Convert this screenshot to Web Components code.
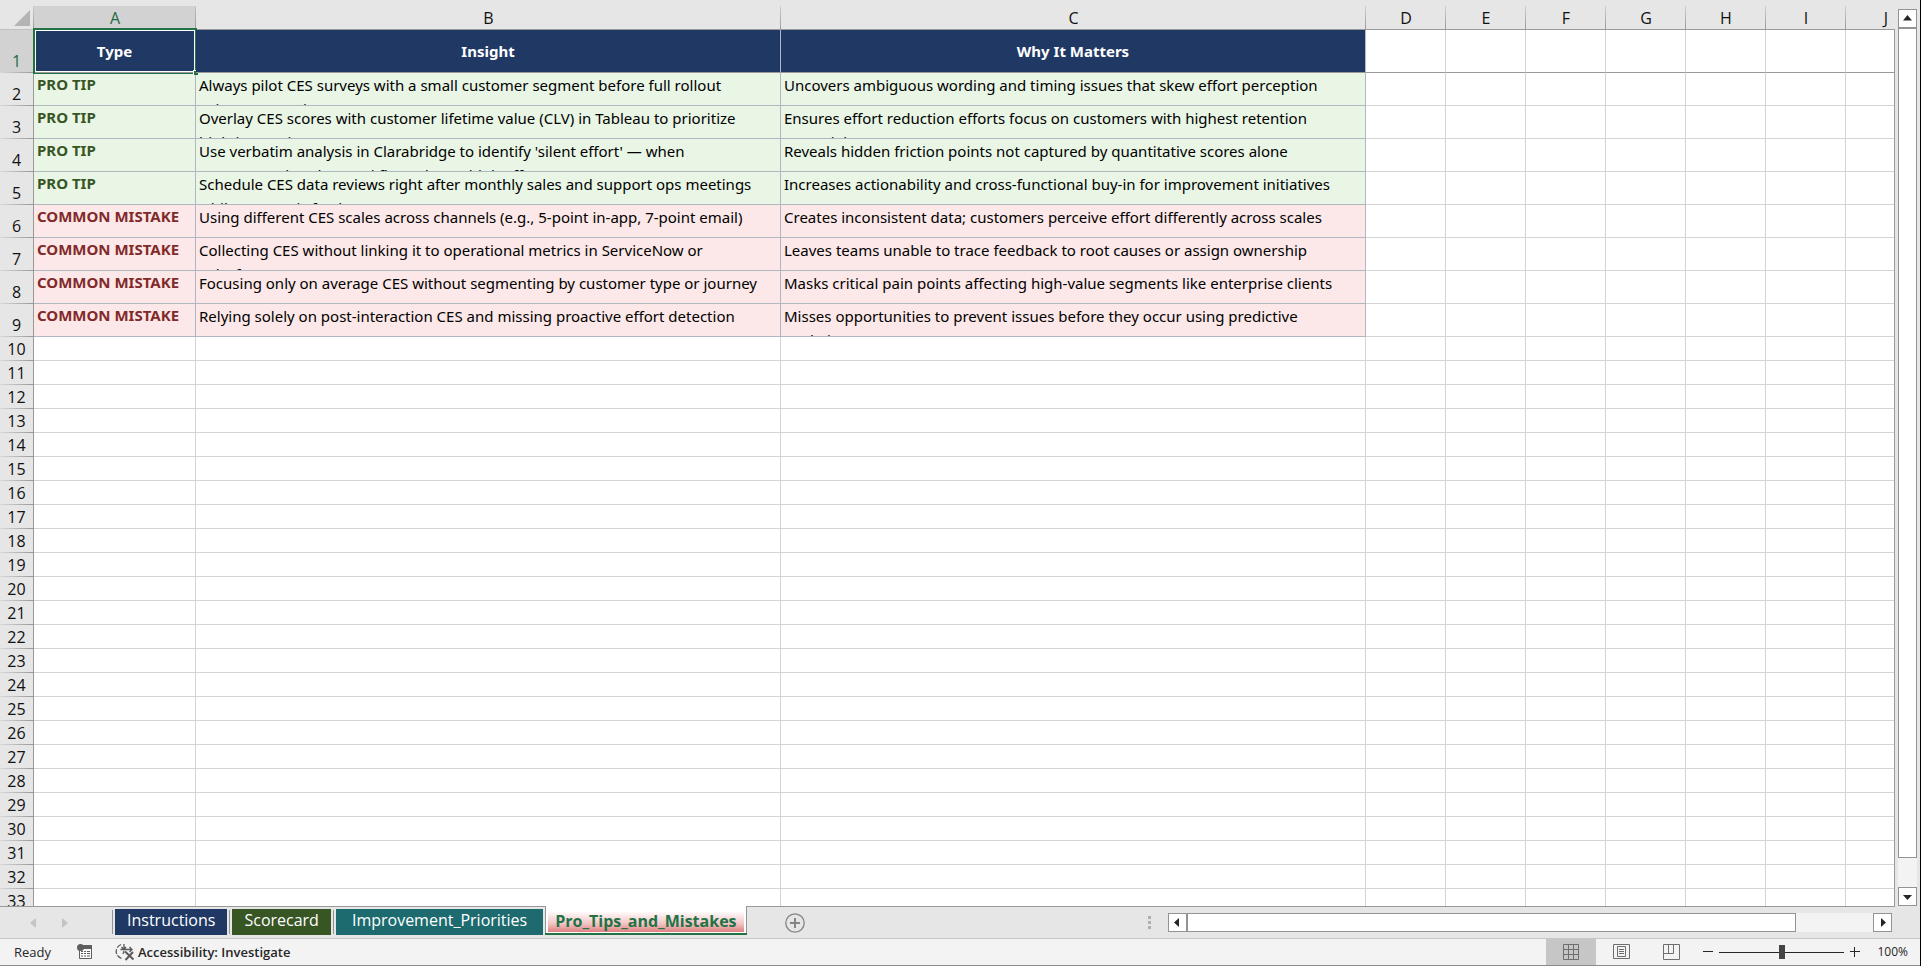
<!DOCTYPE html>
<html lang="en">
<head>
<meta charset="utf-8">
<title>Pro_Tips_and_Mistakes</title>
<style>
    body {
        margin: 0;
        font-family: "Open Sans", "Noto Sans", sans-serif;
        color: #262626;
    }
</style>
</head>
<body>
<work-book></work-book>

<script>
// ---------- data ----------
const tips = [
    ["tip", "PRO TIP", "Always pilot CES surveys with a small customer segment before full rollout\nusing UserTesting", "Uncovers ambiguous wording and timing issues that skew effort perception"],
    ["tip", "PRO TIP", "Overlay CES scores with customer lifetime value (CLV) in Tableau to prioritize\nhigh-impact issues", "Ensures effort reduction efforts focus on customers with highest retention\npotential"],
    ["tip", "PRO TIP", "Use verbatim analysis in Clarabridge to identify 'silent effort' — when\ncustomers abandon workflows due to high effort", "Reveals hidden friction points not captured by quantitative scores alone"],
    ["tip", "PRO TIP", "Schedule CES data reviews right after monthly sales and support ops meetings\nwhile context is fresh", "Increases actionability and cross-functional buy-in for improvement initiatives"],
    ["mistake", "COMMON MISTAKE", "Using different CES scales across channels (e.g., 5-point in-app, 7-point email)", "Creates inconsistent data; customers perceive effort differently across scales"],
    ["mistake", "COMMON MISTAKE", "Collecting CES without linking it to operational metrics in ServiceNow or\nSalesforce", "Leaves teams unable to trace feedback to root causes or assign ownership"],
    ["mistake", "COMMON MISTAKE", "Focusing only on average CES without segmenting by customer type or journey", "Masks critical pain points affecting high-value segments like enterprise clients"],
    ["mistake", "COMMON MISTAKE", "Relying solely on post-interaction CES and missing proactive effort detection", "Misses opportunities to prevent issues before they occur using predictive\nanalytics"]
];
const letters = "ABCDEFGHIJ".split("");
const lastRow = 33;

// ---------- scroll bar ----------
var template_scroll = document.createElement("template");
template_scroll.innerHTML = `
<button class="end" aria-label="Scroll back"><svg viewBox="0 0 17 17"><path/></svg></button>
<div class="thumb"></div>
<div class="track"></div>
<button class="end" aria-label="Scroll forward"><svg viewBox="0 0 17 17"><path/></svg></button>

<style>
    :host {
        display: flex;
        box-sizing: border-box;
    }

    :host([direction="vertical"]) {
        flex-direction: column;
        width: 19px;
    }

    :host([direction="horizontal"]) {
        height: 19px;
    }

    .end, .thumb {
        box-sizing: border-box;
        border: 1px solid #939393;
        background: #fff;
    }

    .end {
        flex: none;
        width: 19px;
        height: 19px;
        padding: 0;
    }

    .end svg {
        display: block;
        fill: #262626;
    }

    .thumb {
        flex: var(--thumb, 8);
    }

    .track {
        flex: var(--track, 1);
        background: #f3f3f3;
    }
</style>
`;

class ScrollRail extends HTMLElement {
    constructor(){
        super();
        this.attachShadow({mode:"open"})
    }

    connectedCallback(){
        this.shadowRoot.appendChild(template_scroll.content.cloneNode(true));
        const arrows = this.getAttribute("direction") === "vertical"
            ? ["M8.500 5 L13 10.500 H4 Z", "M8.500 12 L4 7 H13 Z"]
            : ["M5 8.500 L10 4 V13 Z", "M12 8.500 L7 4 V13 Z"];
        this.shadowRoot.querySelectorAll("path").forEach((path, i) => path.setAttribute("d", arrows[i]));
    }
}
customElements.define("scroll-rail", ScrollRail)

// ---------- grid ----------
var template_grid = document.createElement("template");
template_grid.innerHTML = `
<div class="view">
    <table>
        <colgroup>
            <col class="num"><col class="type"><col class="wide"><col class="wide">
            <col span="7" class="plain">
        </colgroup>
        <thead></thead>
        <tbody></tbody>
    </table>
</div>
<div class="side"><scroll-rail direction="vertical"></scroll-rail></div>

<style>
    :host {
        display: flex;
        min-height: 0;
        background: #e6e6e6;
    }

    .view {
        flex: 1;
        min-width: 0;
        overflow: hidden;
        background: #fff;
        border-bottom: 1px solid #999;
    }

    .side {
        display: flex;
        padding: 9px 3px 1px 4px;
        background: linear-gradient(#999, #999) 0 29px / 1px 100% no-repeat;
        --thumb: 830;
        --track: 29;
    }

    table {
        table-layout: fixed;
        width: 100%;
        border-collapse: separate;
        border-spacing: 0;
    }

    .num { width: 34px; }
    .type { width: 162px; }
    .wide { width: 585px; }
    .plain { width: 80px; }

    th, td {
        box-sizing: border-box;
        padding: 0;
    }

    thead th, tbody th {
        font-size: 16px;
        line-height: 22px;
        font-weight: 400;
        color: #111;
        text-align: center;
        vertical-align: bottom;
    }

    thead th {
        height: 30px;
        border-bottom: 1px solid #999;
        background: linear-gradient(#d0d0d0, #999) right bottom / 1px 23px no-repeat #e6e6e6;
    }

    thead th.on {
        color: #1f6b45;
        background:
            linear-gradient(#c0c0c0, #999) right bottom / 1px 23px no-repeat,
            linear-gradient(#d2d2d2, #d2d2d2) bottom / 100% 23px no-repeat #e6e6e6;
    }

    thead .corner {
        border-bottom-color: #c0c0c0;
    }

    .corner svg {
        display: block;
        margin: 10px 0 3px 14px;
    }

    tbody th {
        padding-bottom: 1px;
        border-right: 1px solid #999;
        background: linear-gradient(90deg, #d8d8d8, #999) bottom / 100% 1px no-repeat #e6e6e6;
    }

    tbody th.on {
        color: #1f6b45;
        background-color: #d2d2d2;
    }

    td {
        height: 24px;
        border-right: 1px solid #d4d4d4;
        border-bottom: 1px solid #d4d4d4;
    }

    .title td {
        height: 43px;
        border-bottom-color: #999;
    }

    .title .fill {
        position: relative;
        background: #203864;
        border-right-color: #b0b7c1;
        color: #fff;
        font: 700 15px/22px "Noto Sans", sans-serif;
        text-align: center;
    }

    .entry td {
        height: 33px;
        vertical-align: top;
        font: 400 15px/24px "Noto Sans", sans-serif;
        color: #000;
    }

    .entry .fill {
        border-color: #b0b7c1;
    }

    .entry .kind {
        font-weight: 700;
        line-height: 22px;
    }

    .tip .fill { background: #e9f5e5; }
    .tip .kind { color: #375623; }
    .mistake .fill { background: #fce8e8; }
    .mistake .kind { color: #822a2a; }

    .text {
        height: 32px;
        padding-left: 3px;
        overflow: hidden;
        white-space: pre;
    }

    /* selection frame lies over the cell's own borders */
    .cursor {
        position: absolute;
        inset: -2px -2px -2px -1px;
        border: 2px solid #217346;
        border-bottom-width: 1px;
        box-shadow: inset 0 -1px #999, inset 0 -2px #fff, inset 0 0 0 1px #fff;
    }

    .cursor::after {
        content: "";
        position: absolute;
        right: -3px;
        bottom: -2px;
        width: 4px;
        height: 4px;
        background: #217346;
        border: solid #fff;
        border-width: 1px 0 0 1px;
    }
</style>
`;

class SheetGrid extends HTMLElement {
    constructor(){
        super();
        this.attachShadow({mode:"open"})
    }

    connectedCallback(){
        this.shadowRoot.appendChild(template_grid.content.cloneNode(true));
        this.shadowRoot.querySelector("thead").innerHTML = `<tr>
            <th class="corner"><svg width="16" height="16"><path d="M16 0V16H0Z" fill="#b4b4b4"/></svg></th>
            ${letters.map((l, i) => `<th scope="col"${i === 0 ? ' class="on"' : ""}>${l}</th>`).join("")}
        </tr>`;

        let rows = `<tr class="title"><th scope="row" class="on">1</th>
            <td class="fill">Type<span class="cursor"></span></td>
            <td class="fill">Insight</td>
            <td class="fill">Why It Matters</td>${this.blanks(7)}</tr>`;
        tips.forEach(([group, kind, insight, why], i) => {
            rows += `<tr class="entry ${group}"><th scope="row">${i + 2}</th>
                <td class="fill kind"><div class="text">${kind}</div></td>
                <td class="fill"><div class="text">${insight}</div></td>
                <td class="fill"><div class="text">${why}</div></td>${this.blanks(7)}</tr>`;
        });
        for (let n = tips.length + 2; n <= lastRow; n++) {
            rows += `<tr><th scope="row">${n}</th>${this.blanks(10)}</tr>`;
        }
        this.shadowRoot.querySelector("tbody").innerHTML = rows;
    }

    blanks(count){
        return "<td></td>".repeat(count);
    }
}
customElements.define("sheet-grid", SheetGrid)

// ---------- one sheet tab ----------
var template_tab = document.createElement("template");
template_tab.innerHTML = `
<button><slot></slot></button>

<style>
    :host {
        display: flex;
        align-items: flex-start;
    }

    :host(:not([active])) {
        margin-top: 2px;
        padding: 0 2px 0 3px;
        height: 26px;
        background: linear-gradient(#939393, #939393) 0 1px / 1px 24px no-repeat;
    }

    button {
        height: 26px;
        padding: 0 var(--pad, 12px) 4px;
        border: 0;
        background: var(--color);
        color: #fff;
        font: 400 16px/22px "Open Sans", sans-serif;
        white-space: nowrap;
    }

    :host([active]) {
        margin-top: -1px;
        padding: 5px 2px 1px;
        height: 21px;
        background: #fff;
        border: solid #939393;
        border-width: 0 1px;
        box-shadow: 0 2px #217346;
    }

    :host([active]) button {
        height: 21px;
        padding: 0 7px 1px;
        background: linear-gradient(#fff, #f3c4c4 60%, #df8080);
        color: #217346;
        font-weight: 700;
        line-height: 20px;
    }
</style>
`;

class SheetTab extends HTMLElement {
    constructor(){
        super();
        this.attachShadow({mode:"open"})
    }

    connectedCallback(){
        this.shadowRoot.appendChild(template_tab.content.cloneNode(true));
    }
}
customElements.define("sheet-tab", SheetTab)

// ---------- tab strip ----------
var template_strip = document.createElement("template");
template_strip.innerHTML = `
<div class="nav">
    <button aria-label="Previous sheet"><svg width="6" height="10"><path d="M6 0V10L0 5Z"/></svg></button>
    <button aria-label="Next sheet"><svg width="6" height="10"><path d="M0 0V10L6 5Z"/></svg></button>
</div>
<slot></slot>
<button class="add" aria-label="New sheet">
    <svg width="20" height="20" fill="none" stroke="#858585"><circle cx="10" cy="10" r="9.200" stroke-width="1.300"/><path d="M10 5V15M5 10H15" stroke-width="2"/></svg>
</button>
<div class="gap"></div>
<svg class="grip" width="3" height="13" fill="#b0b0b0"><path d="M0 0h3v3H0zM0 5h3v3H0zM0 10h3v3H0z"/></svg>
<scroll-rail direction="horizontal"></scroll-rail>

<style>
    :host {
        display: flex;
        align-items: flex-start;
        height: 31px;
        background: #e6e6e6;
        border-bottom: 1px solid #c6c6c6;
    }

    button {
        display: block;
        padding: 0;
        border: 0;
        background: none;
    }

    .nav {
        display: flex;
        gap: 26px;
        padding: 11px 44px 0 30px;
        fill: #c4c4c4;
    }

    svg { display: block; }

    .add { margin: 6px 0 0 38px; }
    .gap { flex: 19; }
    .grip { margin: 9px 17px 0 0; }

    scroll-rail {
        flex: 40;
        margin: 6px 28px 0 0;
        --thumb: 607;
        --track: 77;
    }
</style>
`;

class SheetStrip extends HTMLElement {
    constructor(){
        super();
        this.attachShadow({mode:"open"})
    }

    connectedCallback(){
        this.shadowRoot.appendChild(template_strip.content.cloneNode(true));
    }
}
customElements.define("sheet-strip", SheetStrip)

// ---------- status bar ----------
var template_status = document.createElement("template");
template_status.innerHTML = `
<span class="ready">Ready</span>
<button class="macro" aria-label="Record macro">
    <svg width="16" height="16" viewBox="0 0 16 16">
        <path d="M2.500 5V14.500H14.500V2" fill="#fff" stroke="#5f5f5f"/>
        <path d="M6 1H15V5H6Z" fill="#5f5f5f"/><circle cx="3.500" cy="3.500" r="3.500" fill="#5f5f5f"/>
        <path d="M4 7.500H6M7 7.500H9M10 7.500H13M4 9.500H6M7 9.500H9M10 9.500H13M4 12H6M7 12H9M10 12H13" stroke="#5f5f5f"/>
    </svg>
</button>
<button class="access">
    <svg width="20" height="18" viewBox="0 0 20 18" fill="none" stroke="#5a5a5a" stroke-width="1.300">
        <path d="M6 1.500C2.500 3 1 6 1.200 9C1.500 12 3.500 14.500 7 15.500" stroke-dasharray="5 1.500"/>
        <path d="M9 1V6M6.500 4L9 6.500L11 4M5.500 6.500H17M14.500 4L17 6.500L14.500 9M9 8L8 11"/>
        <path d="M10 8.500L18.500 16.500M18 9L10.500 17" stroke-width="2"/>
    </svg>
    Accessibility: Investigate
</button>
<div class="gap"></div>
<button class="view on" aria-label="Normal"><svg width="16" height="16" fill="none" stroke="#6e6e6e"><path d="M.5 .5H15.500V15.500H.5ZM5.500 .5V15.500M10.500 .5V15.500M.5 5.500H15.500M.5 10.500H15.500"/></svg></button>
<button class="view" aria-label="Page layout"><svg width="17" height="16" fill="none" stroke="#6e6e6e"><path d="M.5 .5H16.500V14.500H.5ZM4.500 2.500H12.500V12.500H4.500ZM6 5.500H11M6 7.500H11M6 9.500H11"/></svg></button>
<button class="view" aria-label="Page break preview"><svg width="17" height="16" fill="none" stroke="#6e6e6e"><path d="M.5 .5H16.500V15.500H.5ZM.5 9.500H10.500V.5M5.500 .5V9.500"/></svg></button>
<button class="step out" aria-label="Zoom out"><svg width="10" height="10" stroke="#262626"><path d="M0 4.500H10"/></svg></button>
<input type="range" min="0" max="200" value="100" aria-label="Zoom">
<button class="step in" aria-label="Zoom in"><svg width="10" height="10" stroke="#262626"><path d="M0 4.500H10M4.500 0V10"/></svg></button>
<button class="level">100%</button>

<style>
    :host {
        display: flex;
        align-items: center;
        height: 26px;
        background: #f3f3f3;
        border-bottom: 1px solid #8c8c8c;
        font-size: 13px;
        line-height: 26px;
    }

    button {
        display: flex;
        align-items: center;
        height: 26px;
        padding: 0;
        border: 0;
        background: none;
        color: inherit;
        font: inherit;
    }

    .ready { margin-left: 14px; }
    .macro { margin-left: 26px; }

    .access {
        gap: 3px;
        margin-left: 22px;
        font-weight: 600;
    }

    .gap { flex: 1; }

    .view {
        justify-content: center;
        width: 50px;
    }

    .view.on { background: #c6c6c6; }

    .step.out { margin-left: 7px; }

    input {
        appearance: none;
        width: 125px;
        height: 14px;
        margin: 0 6px;
        background: linear-gradient(#262626, #262626) center / 100% 1px no-repeat;
    }

    input::-webkit-slider-thumb {
        appearance: none;
        width: 6px;
        height: 14px;
        background: #444;
    }

    .level {
        margin: 0 12px 0 17px;
        font-size: 12px;
    }
</style>
`;

class StatusBar extends HTMLElement {
    constructor(){
        super();
        this.attachShadow({mode:"open"})
    }

    connectedCallback(){
        this.shadowRoot.appendChild(template_status.content.cloneNode(true));
    }
}
customElements.define("status-bar", StatusBar)

// ---------- window ----------
var template_book = document.createElement("template");
template_book.innerHTML = `
<sheet-grid></sheet-grid>
<sheet-strip>
    <sheet-tab class="navy">Instructions</sheet-tab>
    <sheet-tab class="green">Scorecard</sheet-tab>
    <sheet-tab class="teal">Improvement_Priorities</sheet-tab>
    <sheet-tab active>Pro_Tips_and_Mistakes</sheet-tab>
</sheet-strip>
<status-bar></status-bar>

<style>
    :host {
        display: flex;
        flex-direction: column;
        box-sizing: border-box;
        height: 100vh;
        border-right: 1px solid #000;
    }

    sheet-grid { flex: 1; }
    sheet-strip, status-bar { flex: none; }

    .navy { --color: #203864; }
    .green { --color: #375623; }
    .teal { --color: #1d6b6f; --pad: 16px; }
</style>
`;

class WorkBook extends HTMLElement {
    constructor(){
        super();
        this.attachShadow({mode:"open"})
    }

    connectedCallback(){
        this.shadowRoot.appendChild(template_book.content.cloneNode(true));
    }
}
customElements.define("work-book", WorkBook)
</script>
</body>
</html>
